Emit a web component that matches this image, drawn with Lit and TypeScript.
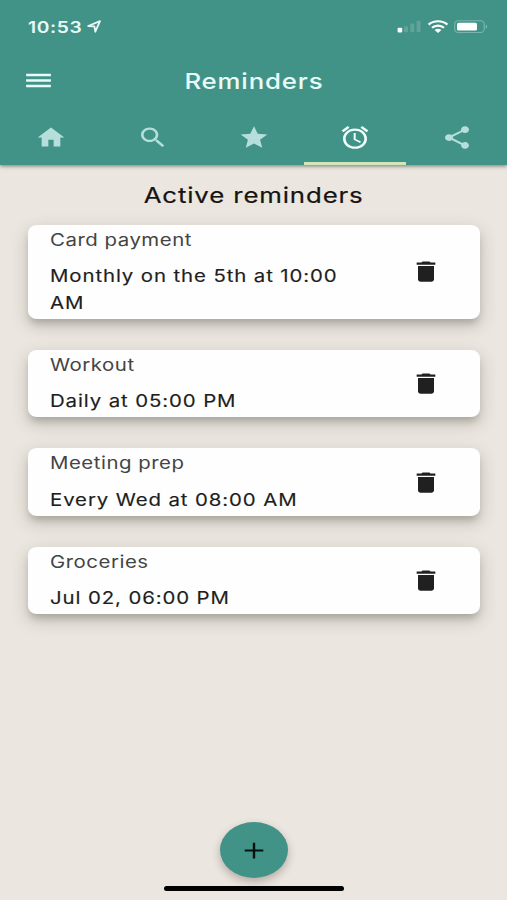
import { LitElement, html, css, svg } from "lit";
import { customElement, property } from "lit/decorators.js";

const ICONS: Record<string, string> = {
  home: "M10 20v-6h4v6h5v-8h3L12 3 2 12h3v8z",
  search:
    "M15.5 14h-.79l-.28-.27C15.41 12.59 16 11.11 16 9.5 16 5.91 13.09 3 9.5 3S3 5.91 3 9.5 5.91 16 9.5 16c1.61 0 3.09-.59 4.23-1.57l.27.28v.79l5 4.99L20.49 19l-4.99-5zm-6 0C7.01 14 5 11.99 5 9.5S7.01 5 9.5 5 14 7.01 14 9.5 11.99 14 9.5 14z",
  star: "M12 17.27L18.18 21l-1.64-7.03L22 9.24l-7.19-.61L12 2 9.19 8.63 2 9.24l5.46 4.73L5.82 21z",
  alarm:
    "M22 5.72l-4.6-3.86-1.29 1.53 4.6 3.86L22 5.72zM7.88 3.39L6.6 1.86 2 5.71l1.29 1.53 4.59-3.85zM12.5 8H11v6l4.75 2.85.75-1.23-4-2.37V8zM12 4c-4.97 0-9 4.03-9 9s4.02 9 9 9c4.97 0 9-4.03 9-9s-4.03-9-9-9zm0 16c-3.87 0-7-3.13-7-7s3.13-7 7-7 7 3.13 7 7-3.13 7-7 7z",
  share:
    "M18 16.08c-.76 0-1.44.3-1.96.77L8.91 12.7c.05-.23.09-.46.09-.7s-.04-.47-.09-.7l7.05-4.11c.54.5 1.25.81 2.04.81 1.66 0 3-1.34 3-3s-1.34-3-3-3-3 1.34-3 3c0 .24.04.47.09.7L8.04 9.81C7.5 9.31 6.79 9 6 9c-1.66 0-3 1.34-3 3s1.34 3 3 3c.79 0 1.5-.31 2.04-.81l7.12 4.16c-.05.21-.08.43-.08.65 0 1.61 1.31 2.92 2.92 2.92s2.92-1.31 2.92-2.92-1.31-2.92-2.92-2.92z",
  menu: "M3 18h18v-2.2H3v2.2zm0-4.9h18v-2.2H3v2.2zm0-7.1v2.2h18V6H3z",
  trash:
    "M6 19c0 1.1.9 2 2 2h8c1.1 0 2-.9 2-2V7H6v12zM19 4h-3.5l-1-1h-5l-1 1H5v2h14V4z",
  plus: "M19 12.9h-6.1V19h-1.8v-6.1H5v-1.8h6.1V5h1.8v6.1H19z",
};

@customElement("md-icon")
export class MdIcon extends LitElement {
  @property() name = "";
  static styles = css`
    :host {
      display: block;
      width: 32px;
      height: 27px;
    }
    svg {
      display: block;
      width: 100%;
      height: 100%;
      fill: currentColor;
    }
  `;
  render() {
    return html`<svg viewBox="0 0 24 24" preserveAspectRatio="none">
      ${svg`<path d=${ICONS[this.name]}></path>`}
    </svg>`;
  }
}

@customElement("reminder-card")
export class ReminderCard extends LitElement {
  @property() name = "";
  @property() when = "";
  static styles = css`
    :host {
      display: flex;
      align-items: center;
      justify-content: space-between;
      box-sizing: border-box;
      padding: 2px 38px 2.5px 22px;
      border-radius: 9px / 8px;
      background: #fefefe;
      box-shadow: 0 6px 7px -2px rgba(60, 60, 50, 0.26),
        0 6px 16px 2px rgba(60, 60, 50, 0.18);
    }
    .text {
      width: 252px;
      transform: scaleX(1.2);
      transform-origin: left;
      font-size: 17px;
      letter-spacing: 0.43px;
    }
    .name {
      line-height: 27px;
      margin-bottom: 9.5px;
      color: #444;
    }
    .when {
      line-height: 26.5px;
      letter-spacing: 0.74px;
      -webkit-text-stroke: 0.15px #1e1e1e;
      color: #1e1e1e;
    }
    md-icon {
      color: #202020;
      margin-top: 1px;
    }
  `;
  render() {
    return html`<div class="text">
        <div class="name">${this.name}</div>
        <div class="when">${this.when}</div>
      </div>
      <md-icon name="trash"></md-icon>`;
  }
}

@customElement("app-root")
export class AppRoot extends LitElement {
  static styles = css`
    :host {
      display: flex;
      flex-direction: column;
      height: 900px;
      overflow: hidden;
      background: #ebe6df;
      font-family: Inter, "Liberation Sans", sans-serif;
    }
    header {
      display: flex;
      flex-direction: column;
      height: 165px;
      flex: none;
      background: #429387;
      color: #e9fbf9;
      box-shadow: 0 1px 4px rgba(0, 0, 0, 0.5);
    }
    .status {
      display: flex;
      align-items: center;
      height: 53px;
      padding: 0 19px 0 28px;
    }
    .wide {
      display: inline-block;
      transform: scaleX(1.2);
      white-space: nowrap;
    }
    .time {
      width: 59px;
      transform-origin: left;
      font-size: 16px;
      font-weight: 600;
      letter-spacing: 0.5px;
    }
    .loc {
      display: block;
      width: 15px;
      height: 13px;
    }
    .system {
      display: block;
      width: 92px;
      height: 14px;
      margin-left: auto;
    }
    .bar {
      display: grid;
      grid-template-columns: 1fr auto 1fr;
      align-items: center;
      height: 55px;
      padding: 0 21px 0 22px;
    }
    .bar md-icon {
      width: 33px;
    }
    .title {
      font-size: 21.5px;
      font-weight: 500;
      letter-spacing: 0.7px;
    }
    .tabs {
      display: grid;
      grid-template-columns: repeat(5, 1fr);
      height: 57px;
    }
    .tab {
      display: flex;
      align-items: center;
      justify-content: center;
      box-sizing: border-box;
      padding: 4px 0 0 1px;
      border-bottom: 3px solid transparent;
      color: #b6dfdc;
    }
    .tab.on {
      color: #f0fffd;
      border-color: #cfe8b9;
    }
    main {
      display: flex;
      flex-direction: column;
      padding: 0 27px 0 28px;
    }
    h1 {
      margin: 0;
      height: 59.5px;
      line-height: 60px;
      text-align: center;
      font-size: 21.5px;
      font-weight: 400;
      letter-spacing: 0.72px;
      -webkit-text-stroke: 0.2px #161412;
      color: #161412;
    }
    .list {
      display: flex;
      flex-direction: column;
      gap: 31px;
    }
    footer {
      display: flex;
      flex-direction: column;
      align-items: center;
      margin-top: auto;
      padding-bottom: 9px;
    }
    .fab {
      display: flex;
      align-items: center;
      justify-content: center;
      width: 68px;
      height: 56px;
      padding: 0;
      border: 0;
      border-radius: 50%;
      background: #429387;
      color: #06100f;
      box-shadow: 0 4px 8px rgba(70, 50, 50, 0.32);
    }
    .handle {
      width: 180px;
      height: 5.5px;
      margin-top: 7.5px;
      border-radius: 3px;
      background: #000;
      z-index: 1;
    }
  `;

  private tabs = ["home", "search", "star", "alarm", "share"];
  private reminders = [
    ["Card payment", "Monthly on the 5th at 10:00 AM"],
    ["Workout", "Daily at 05:00 PM"],
    ["Meeting prep", "Every Wed at 08:00 AM"],
    ["Groceries", "Jul 02, 06:00 PM"],
  ];

  render() {
    return html`
      <header>
        <div class="status">
          <span class="wide time">10:53</span>
          <svg class="loc" viewBox="0 0 15 13">
            <path
              d="M1.2 6L13 1.1 8.3 11.7 7.4 6.3z"
              fill="none"
              stroke="#e9fbf9"
              stroke-width="1.8"
              stroke-linejoin="round"
            />
          </svg>
          <svg class="system" viewBox="0 0 92 14">
            <g fill="#5fa399">
              <rect x="8" y="6.2" width="4" height="6" rx="1" />
              <rect x="14.3" y="3.6" width="4" height="8.6" rx="1" />
              <rect x="20.6" y="0.8" width="4" height="11.4" rx="1" />
            </g>
            <rect x="1.6" y="7.8" width="4.6" height="4.6" rx="1" fill="#fff" />
            <g fill="none" stroke="#fff" stroke-width="2.2">
              <path d="M32.6 4.6C37.5 .1 46.5 .1 51.4 4.6" />
              <path d="M36 7.8C39.3 4.8 44.7 4.8 48 7.8" />
            </g>
            <path d="M38.6 10C40.5 8.4 43.5 8.4 45.4 10L42 13z" fill="#fff" />
            <rect x="58.7" y="0.7" width="29.5" height="11.8" rx="3.6" fill="none" stroke="#7ab5ad" stroke-width="1.1" />
            <rect x="61" y="2.7" width="20" height="7.9" rx="1.6" fill="#fff" />
            <path d="M89.6 4.7c2.3.6 2.3 3.3 0 3.9z" fill="#7ab5ad" />
          </svg>
        </div>
        <div class="bar">
          <md-icon name="menu"></md-icon>
          <span class="wide title">Reminders</span>
          <span></span>
        </div>
        <div class="tabs">
          ${this.tabs.map(
            (t) => html`<div class="tab ${t === "alarm" ? "on" : ""}">
              <md-icon name=${t}></md-icon>
            </div>`
          )}
        </div>
      </header>
      <main>
        <h1><span class="wide">Active reminders</span></h1>
        <div class="list">
          ${this.reminders.map(
            ([n, w]) => html`<reminder-card .name=${n} .when=${w}></reminder-card>`
          )}
        </div>
      </main>
      <footer>
        <button class="fab"><md-icon name="plus"></md-icon></button>
        <div class="handle"></div>
      </footer>
    `;
  }
}
